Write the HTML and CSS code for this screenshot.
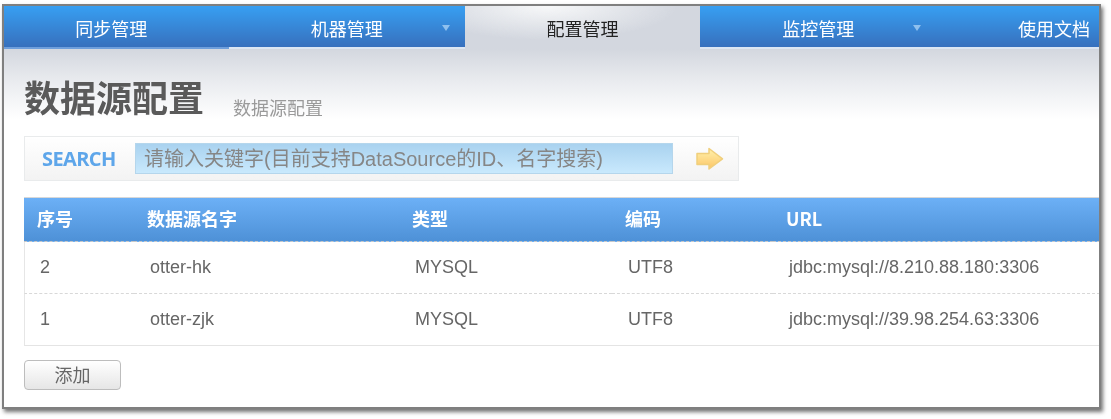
FILE: index.html
```html
<!DOCTYPE html>
<html lang="zh-CN">
<head>
<meta charset="utf-8">
<title>数据源配置</title>
<link rel="stylesheet" href="styles.css">
</head>
<body>
<div class="window">
  <nav class="nav">
    <a class="tab first">同步管理</a>
    <a class="tab">机器管理<span class="caret"></span></a>
    <a class="tab active">配置管理</a>
    <a class="tab">监控管理<span class="caret"></span></a>
    <a class="tab">使用文档</a>
  </nav>
  <main class="content">
    <header class="heading">
      <h1 class="title">数据源配置</h1>
      <span class="subtitle">数据源配置</span>
    </header>
    <form class="search">
      <span class="search-label">SEARCH</span>
      <div class="search-input">请输入关键字(目前支持DataSource的ID、名字搜索)</div>
      <svg class="go" width="30" height="25" viewBox="0 0 30 25" aria-hidden="true">
        <defs>
          <linearGradient id="goFill" x1="0" y1="0" x2="0" y2="1">
            <stop offset="0" stop-color="#fff2ad"/>
            <stop offset="1" stop-color="#fcc566"/>
          </linearGradient>
        </defs>
        <path d="M2 7.500H14V2.500L27.500 12.800 14 23V18.500H2Z" fill="url(#goFill)" stroke="#f0cf7c" stroke-width="1.500" stroke-linejoin="round"/>
      </svg>
    </form>
    <table class="grid">
      <thead>
        <tr><th class="c1">序号</th><th class="c2">数据源名字</th><th class="c3">类型</th><th class="c4">编码</th><th>URL</th></tr>
      </thead>
      <tbody>
        <tr><td>2</td><td>otter-hk</td><td>MYSQL</td><td>UTF8</td><td>jdbc:mysql://8.210.88.180:3306</td></tr>
        <tr><td>1</td><td>otter-zjk</td><td>MYSQL</td><td>UTF8</td><td>jdbc:mysql://39.98.254.63:3306</td></tr>
      </tbody>
    </table>
    <button class="btn" type="button">添加</button>
  </main>
</div>
</body>
</html>
```

FILE: styles.css
```css
* { box-sizing: border-box; }
html, body { margin: 0; height: 100%; background: #fff; overflow: hidden; }
body { padding: 4px 10px 10px 2px; font-family: "Liberation Sans", "Noto Sans CJK SC", sans-serif; }
.window {
  width: 1099px;
  height: 405px;
  border: 2px solid #7f7f7f;
  box-shadow: 2px 3px 4px rgba(0,0,0,.55);
  background: #fff;
  overflow: hidden;
  filter: blur(.35px);
}
.nav {
  display: flex;
  height: 43px;
  margin-left: -10.7px;
  width: 1220px;
  font-family: "Noto Sans CJK SC", "Liberation Sans", sans-serif;
}
.tab {
  position: relative;
  flex: 0 0 235.7px;
  height: 43px;
  padding-top: 10px;
  line-height: 24px;
  font-size: 18px;
  text-align: center;
  color: #fff;
  background: linear-gradient(#379ff2, #3770bd);
  border-bottom: 2px solid #dce6f3;
}
.tab.first { border-bottom-color: #6f9fdc; }
.tab.active {
  color: #222;
  border-bottom: 0;
  background: radial-gradient(ellipse 130px 34px at 35% 0, #f7f8f9, rgba(247,248,249,0)), #d3d7df;
}
.caret {
  position: absolute;
  right: 15px;
  top: 19px;
  width: 0;
  height: 0;
  border-left: 4px solid transparent;
  border-right: 4px solid transparent;
  border-top: 6px solid #8fc0ee;
}
.content {
  height: 358px;
  padding: 0 0 0 20px;
  background: linear-gradient(#d3d7df 0, #e8eaee 30px, #fff 70px);
}
.heading {
  display: flex;
  align-items: flex-end;
  gap: 29px;
  height: 87px;
  padding-bottom: 14px;
}
.title {
  margin: 0;
  font: bold 36px/52px "Noto Sans CJK SC", sans-serif;
  color: #5a5a5a;
}
.subtitle {
  margin-bottom: 2px;
  font: 18px/26px "Noto Sans CJK SC", sans-serif;
  color: #9a9a9a;
}
.search {
  display: flex;
  align-items: center;
  width: 715px;
  height: 45px;
  padding-left: 17px;
  border: 1px solid #e9ebec;
  background: linear-gradient(#fff, #f3f3f3);
}
.search-label {
  width: 93px;
  font: bold 20px/1 "Open Sans", "Liberation Sans", sans-serif;
  letter-spacing: -.6px;
  color: #5ea6ea;
}
.search-input {
  width: 538px;
  height: 31px;
  padding-left: 8px;
  font: 20px/30px "Liberation Sans", "Noto Sans CJK SC", sans-serif;
  white-space: nowrap;
  color: #868686;
  background: linear-gradient(#a9d2ef, #c9e9fd);
  border: 1px solid #b5d6ec;
}
.go { margin-left: 22px; }
.grid {
  margin-top: 16px;
  width: 1076px;
  border-collapse: separate;
  border-spacing: 0;
  table-layout: fixed;
  font-size: 18px;
  color: #666;
}
.grid th {
  height: 45px;
  padding: 0 0 3px 13px;
  text-align: left;
  font: bold 18px "Noto Sans CJK SC", "Liberation Sans", sans-serif;
  color: #fff;
  background: linear-gradient(#6cb0f6, #4e91d7);
  border-top: 1px solid #d8d8d8;
  border-bottom: 1px dashed #c8c8c8;
}
.c1 { width: 110px; }
.c2 { width: 265px; }
.c3 { width: 213px; }
.c4 { width: 161px; }
.grid td {
  height: 52px;
  padding: 0 0 0 16px;
  border-bottom: 1px dashed #d8d8d8;
}
.grid tr:last-child td { border-bottom: 1px solid #e4e4e4; }
.grid td:first-child { border-left: 1px solid #e6e6e6; padding-left: 15px; }
.btn {
  display: block;
  margin-top: 14px;
  width: 97px;
  height: 30px;
  padding: 0 0 2px;
  font: 18px/26px "Noto Sans CJK SC", sans-serif;
  color: #666;
  background: linear-gradient(#fff, #e6e6e6);
  border: 1px solid #bdbdbd;
  border-radius: 4px;
}
```
